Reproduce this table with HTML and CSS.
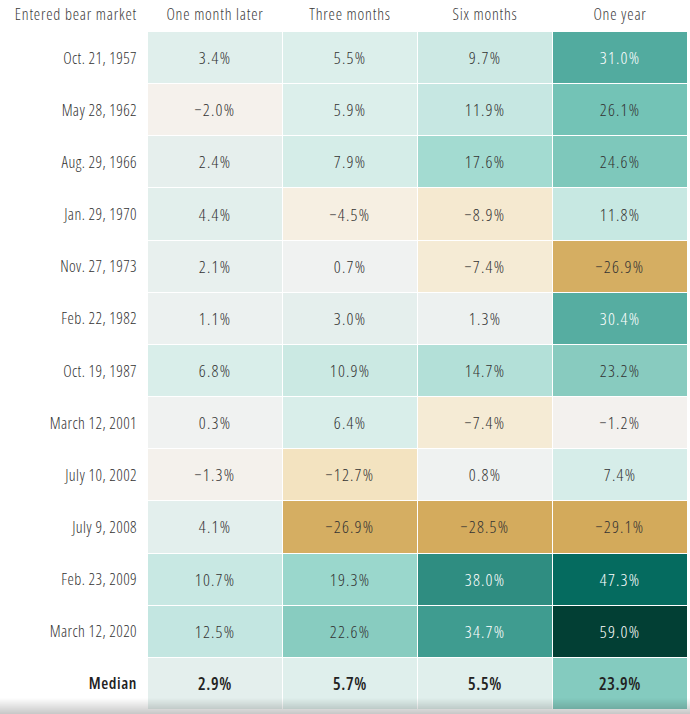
FILE: index.html
```html
<!DOCTYPE html>
<html>
<head>
<meta charset="utf-8">
<link rel="stylesheet" href="styles.css">
</head>
<body>
<div class="table">
  <div class="hd lbl">Entered bear market</div>
  <div class="hd">One month later</div>
  <div class="hd">Three months</div>
  <div class="hd">Six months</div>
  <div class="hd">One year</div>

  <div class="lbl">Oct. 21, 1957</div>
  <div class="c" style="background:#e0efec">3.4%</div>
  <div class="c" style="background:#dcefeb">5.5%</div>
  <div class="c" style="background:#cde9e4">9.7%</div>
  <div class="c w" style="background:#52ab9f">31.0%</div>

  <div class="lbl">May 28, 1962</div>
  <div class="c" style="background:#f5f1ec">−2.0%</div>
  <div class="c" style="background:#dcefeb">5.9%</div>
  <div class="c" style="background:#c6e7e2">11.9%</div>
  <div class="c" style="background:#73c3b6">26.1%</div>

  <div class="lbl">Aug. 29, 1966</div>
  <div class="c" style="background:#e6efed">2.4%</div>
  <div class="c" style="background:#d5ede8">7.9%</div>
  <div class="c" style="background:#a3dbd1">17.6%</div>
  <div class="c" style="background:#7ec8bb">24.6%</div>

  <div class="lbl">Jan. 29, 1970</div>
  <div class="c" style="background:#e2efec">4.4%</div>
  <div class="c" style="background:#f6efe2">−4.5%</div>
  <div class="c" style="background:#f5e9d0">−8.9%</div>
  <div class="c" style="background:#c7e8e2">11.8%</div>

  <div class="lbl">Nov. 27, 1973</div>
  <div class="c" style="background:#e8f0ee">2.1%</div>
  <div class="c" style="background:#f0f2f1">0.7%</div>
  <div class="c" style="background:#f5ebd5">−7.4%</div>
  <div class="c" style="background:#d5ae62">−26.9%</div>

  <div class="lbl">Feb. 22, 1982</div>
  <div class="c" style="background:#ecf1f0">1.1%</div>
  <div class="c" style="background:#e5efed">3.0%</div>
  <div class="c" style="background:#edf1f0">1.3%</div>
  <div class="c w" style="background:#56ada1">30.4%</div>

  <div class="lbl">Oct. 19, 1987</div>
  <div class="c" style="background:#d9eeea">6.8%</div>
  <div class="c" style="background:#cbe9e3">10.9%</div>
  <div class="c" style="background:#b3e0d8">14.7%</div>
  <div class="c" style="background:#88cbbf">23.2%</div>

  <div class="lbl">March 12, 2001</div>
  <div class="c" style="background:#f0f2f1">0.3%</div>
  <div class="c" style="background:#d9eeea">6.4%</div>
  <div class="c" style="background:#f5ebd5">−7.4%</div>
  <div class="c" style="background:#f3f1ee">−1.2%</div>

  <div class="lbl">July 10, 2002</div>
  <div class="c" style="background:#f4f1ec">−1.3%</div>
  <div class="c" style="background:#f3e3c0">−12.7%</div>
  <div class="c" style="background:#eff2f1">0.8%</div>
  <div class="c" style="background:#d6ede9">7.4%</div>

  <div class="lbl">July 9, 2008</div>
  <div class="c" style="background:#e3efed">4.1%</div>
  <div class="c" style="background:#d5ae62">−26.9%</div>
  <div class="c" style="background:#d4ab5d">−28.5%</div>
  <div class="c" style="background:#d3aa5b">−29.1%</div>

  <div class="lbl">Feb. 23, 2009</div>
  <div class="c" style="background:#c8e8e3">10.7%</div>
  <div class="c" style="background:#9ad7cc">19.3%</div>
  <div class="c w" style="background:#2f8d81">38.0%</div>
  <div class="c w" style="background:#056b5f">47.3%</div>

  <div class="lbl">March 12, 2020</div>
  <div class="c" style="background:#c3e6e1">12.5%</div>
  <div class="c" style="background:#88ccc0">22.6%</div>
  <div class="c w" style="background:#3f9c90">34.7%</div>
  <div class="c w" style="background:#023f34">59.0%</div>

  <div class="lbl b">Median</div>
  <div class="c b" style="background:#e4efed">2.9%</div>
  <div class="c b" style="background:#dfefec">5.7%</div>
  <div class="c b" style="background:#e0efec">5.5%</div>
  <div class="c b" style="background:#84cbbf">23.9%</div>
</div>
<div class="shade"></div>
</body>
</html>
```

FILE: styles.css
```css
html, body {
  margin: 0;
  padding: 0;
  background: #fff;
}
body {
  font-family: "Open Sans", "Liberation Sans", sans-serif;
  font-stretch: 75%;
  font-weight: 300;
  font-size: 16px;
  color: #333;
  width: 690px;
  height: 714px;
  overflow: hidden;
}
.table {
  display: grid;
  grid-template-columns: 147px repeat(4, 134px);
  grid-template-rows: 31px repeat(13, 51.17px);
  column-gap: 1px;
  row-gap: 1px;
  width: 686px;
}
.table > div {
  display: flex;
  align-items: center;
  justify-content: center;
  white-space: nowrap;
}
.table > .lbl {
  justify-content: flex-end;
  padding-right: 10px;
  letter-spacing: 0.4px;
}
.table > .hd {
  align-items: flex-start;
  padding-top: 3px;
  color: #3a3a3a;
  letter-spacing: 0.8px;
}
.c {
  font-size: 17px;
  letter-spacing: 1.2px;
  color: #333;
}
.c.w {
  color: #fff;
}
.table > .b {
  font-weight: 600;
  color: #222;
  letter-spacing: 0.6px;
}
.shade {
  position: fixed;
  left: 0;
  right: 0;
  bottom: 0;
  height: 16px;
  background: linear-gradient(to bottom, rgba(0,0,0,0), rgba(0,0,0,0.22));
  pointer-events: none;
}
```
